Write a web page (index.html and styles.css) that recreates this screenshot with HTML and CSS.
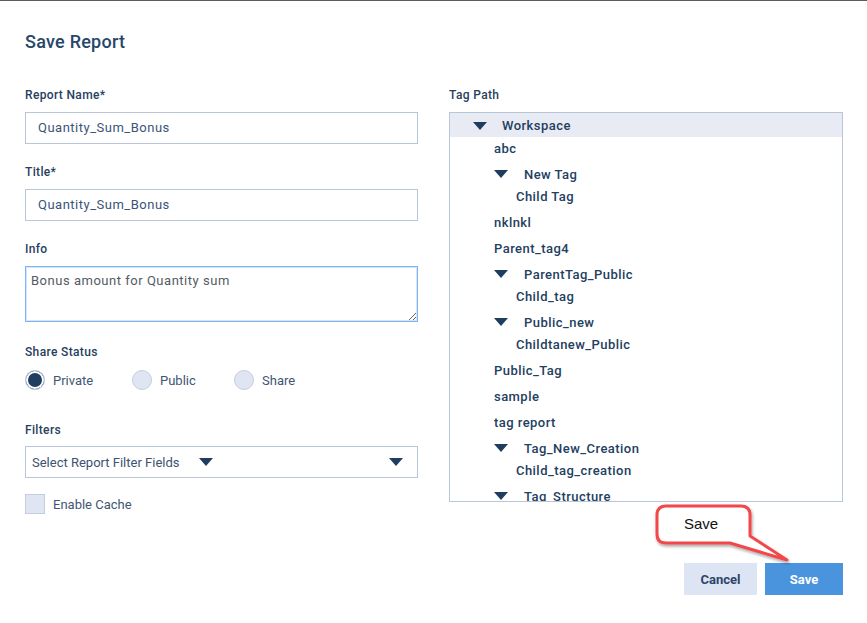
FILE: index.html
```html
<!DOCTYPE html>
<html>
<head>
<meta charset="utf-8">
<link rel="stylesheet" href="styles.css">
</head>
<body>
<div class="topline"></div>
<div class="dialog">
  <h1 class="title">Save Report</h1>
  <div class="columns">
    <div class="col-left">
      <label class="label">Report Name*</label>
      <div class="input">Quantity_Sum_Bonus</div>
      <label class="label gap">Title*</label>
      <div class="input">Quantity_Sum_Bonus</div>
      <label class="label gap">Info</label>
      <textarea class="textarea">Bonus amount for Quantity sum</textarea>
      <label class="label gap2">Share Status</label>
      <div class="radios">
        <span class="radio checked"></span><span class="radio-label">Private</span>
        <span class="radio"></span><span class="radio-label public">Public</span>
        <span class="radio"></span><span class="radio-label">Share</span>
      </div>
      <label class="label gap3">Filters</label>
      <div class="select">
        <span class="select-text">Select Report Filter Fields</span>
        <span class="tri"></span>
        <span class="spacer"></span>
        <span class="tri"></span>
      </div>
      <div class="check-row">
        <span class="checkbox"></span><span class="check-label">Enable Cache</span>
      </div>
    </div>
    <div class="col-right">
      <label class="label">Tag Path</label>
      <div class="tree">
        <div class="row root"><span class="toggle"><span class="tri"></span></span>Workspace</div>
        <div class="group"><div class="row l1">abc</div></div>
        <div class="group">
          <div class="row l1"><span class="toggle"><span class="tri"></span></span>New Tag</div>
          <div class="row l2">Child Tag</div>
        </div>
        <div class="group"><div class="row l1">nklnkl</div></div>
        <div class="group"><div class="row l1">Parent_tag4</div></div>
        <div class="group">
          <div class="row l1"><span class="toggle"><span class="tri"></span></span>ParentTag_Public</div>
          <div class="row l2">Child_tag</div>
        </div>
        <div class="group">
          <div class="row l1"><span class="toggle"><span class="tri"></span></span>Public_new</div>
          <div class="row l2">Childtanew_Public</div>
        </div>
        <div class="group"><div class="row l1">Public_Tag</div></div>
        <div class="group"><div class="row l1">sample</div></div>
        <div class="group"><div class="row l1">tag report</div></div>
        <div class="group">
          <div class="row l1"><span class="toggle"><span class="tri"></span></span>Tag_New_Creation</div>
          <div class="row l2">Child_tag_creation</div>
        </div>
        <div class="group">
          <div class="row l1"><span class="toggle"><span class="tri"></span></span>Tag_Structure</div>
        </div>
      </div>
    </div>
  </div>
  <div class="footer">
    <button class="btn cancel">Cancel</button>
    <button class="btn save">Save</button>
  </div>
</div>
<div class="callout">
  <svg width="145" height="66" viewBox="0 0 145 66">
    <defs>
      <filter id="sh" x="-20%" y="-20%" width="140%" height="160%">
        <feDropShadow dx="1" dy="2" stdDeviation="1.5" flood-color="#000" flood-opacity="0.35"/>
      </filter>
    </defs>
    <path d="M16,6 H91 Q100,6 100,15 V36 L137,60 L80,43 H16 Q7,43 7,34 V15 Q7,6 16,6 Z" fill="#fff" stroke="#f2474b" stroke-width="3" stroke-linejoin="round" filter="url(#sh)"/>
  </svg>
  <span class="callout-text">Save</span>
</div>
</body>
</html>
```

FILE: styles.css
```css
* { box-sizing: border-box; }
html, body { margin: 0; padding: 0; background: #fff; }
body {
  font-family: Roboto, "Liberation Sans", sans-serif;
  color: #24405f;
  width: 867px;
  height: 623px;
  overflow: hidden;
  position: relative;
}
.topline { height: 1px; background: #5c5c5c; }
.dialog { padding: 0 24px 0 25px; }
.title {
  margin: 29px 0 0;
  font-size: 18px;
  line-height: 24px;
  font-weight: 500;
  color: #274768;
  letter-spacing: 0.25px;
}
.columns {
  display: flex;
  gap: 31px;
  margin-top: 33px;
}
.col-left { width: 393px; display: flex; flex-direction: column; }
.col-right { flex: 1; display: flex; flex-direction: column; }
.label {
  display: block;
  font-size: 12px;
  line-height: 16px;
  font-weight: 500;
  color: #27405e;
  margin-bottom: 9px;
  letter-spacing: 0.35px;
}
.label.gap { margin-top: 20px; }
.label.gap2 { margin-top: 22px; margin-bottom: 10px; }
.label.gap3 { margin-top: 32px; margin-bottom: 8px; }
.input {
  height: 32px;
  border: 1px solid #b9c6da;
  padding-left: 12px;
  font-size: 13px;
  line-height: 30px;
  color: #3a5578;
  letter-spacing: 0.5px;
}
.textarea {
  display: block;
  width: 393px;
  height: 56px;
  margin: 0;
  border: 1px solid #7fb5ef;
  box-shadow: 0 0 0 1px #d3e6fb inset;
  padding: 6px 5px 4px;
  font-family: Roboto, "Liberation Sans", sans-serif;
  font-size: 13px;
  line-height: 16px;
  color: #555b63;
  letter-spacing: 0.52px;
  resize: vertical;
  outline: none;
  overflow: hidden;
}
.radios { display: flex; align-items: center; height: 20px; }
.radio {
  width: 20px;
  height: 20px;
  border-radius: 50%;
  background: #dfe5f3;
  border: 1px solid #c4cde0;
  flex: none;
}
.radio.checked {
  background: #1f3d60;
  box-shadow: 0 0 0 2px #fff inset;
  border-color: #bfc9dc;
}
.radio-label {
  font-size: 13px;
  color: #3f5674;
  margin-left: 8px;
  width: 79px;
}
.radio-label.public { width: 74px; }
.select {
  height: 32px;
  border: 1px solid #b9c6da;
  display: flex;
  align-items: center;
  padding: 0 14px 0 6px;
  font-size: 13px;
  color: #3d5271;
}
.select-text { margin-right: 19px; }
.spacer { flex: 1; }
.tri {
  width: 0;
  height: 0;
  border-left: 7px solid transparent;
  border-right: 7px solid transparent;
  border-top: 8px solid #1f3d60;
  display: inline-block;
}
.check-row {
  display: flex;
  align-items: center;
  margin-top: 16px;
}
.checkbox {
  width: 20px;
  height: 20px;
  background: #dfe5f3;
  border: 1px solid #c4cde0;
  flex: none;
}
.check-label { font-size: 13px; color: #3f5674; margin-left: 8px; }
.tree {
  height: 390px;
  border: 1px solid #b9c6da;
  overflow: hidden;
  font-size: 13px;
  font-weight: 500;
  color: #23405f;
  letter-spacing: 0.45px;
}
.row {
  height: 22px;
  display: flex;
  align-items: center;
  white-space: nowrap;
}
.row.root {
  height: 24px;
  padding-top: 1px;
  background: #e8ebf4;
  padding-left: 23px;
}
.row.root .toggle { width: 29px; }
.row.l1 { padding-left: 44px; }
.row.l2 { padding-left: 66px; }
.toggle { width: 30px; display: inline-flex; align-items: center; flex: none; }
.group { margin-bottom: 4px; }
.footer {
  display: flex;
  justify-content: flex-end;
  gap: 8px;
  margin-top: 49px;
}
.btn {
  height: 32px;
  border: none;
  font-family: Roboto, "Liberation Sans", sans-serif;
  font-size: 13px;
  font-weight: 700;
  padding: 0;
}
.btn.cancel { width: 73px; background: #dde4f3; color: #2c4568; }
.btn.save { width: 78px; background: #4a94dd; color: #fff; }
.callout {
  position: absolute;
  left: 650px;
  top: 500px;
  width: 145px;
  height: 66px;
}
.callout svg { display: block; }
.callout-text {
  position: absolute;
  left: 34px;
  top: 15px;
  font-family: "Liberation Sans", Arial, sans-serif;
  font-size: 15px;
  color: #111;
}
```
